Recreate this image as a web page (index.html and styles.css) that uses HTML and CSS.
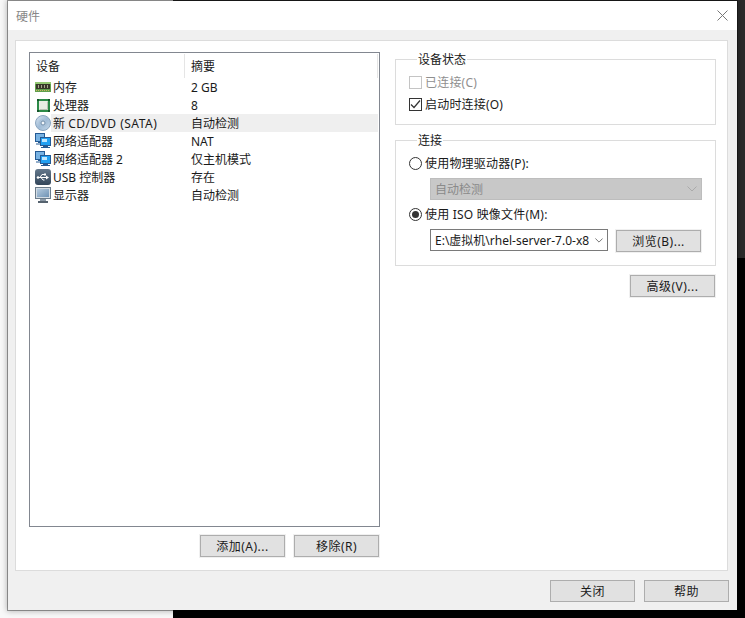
FILE: index.html
```html
<!DOCTYPE html>
<html lang="zh-CN">
<head>
    <meta charset="UTF-8">
    <meta name="viewport" content="width=device-width, initial-scale=1.0">
    <title>硬件</title>
    <link rel="stylesheet" href="styles.css">
</head>
<body>

<div class="dialog">
    <div class="title-bar">
        <span class="title-text">硬件</span>
        <svg class="close-icon" width="11" height="11" viewBox="0 0 11 11">
            <path d="M0.5 0.5 L10.5 10.5 M10.5 0.5 L0.5 10.5" stroke="#777" stroke-width="1" fill="none"/>
        </svg>
    </div>

    <div class="main-panel">
        <div class="left-column">
            <div class="device-list">
                <div class="list-head">
                    <div class="col-device">设备</div>
                    <div class="col-summary">摘要</div>
                    <div class="col-end"></div>
                </div>

                <div class="device-row">
                    <svg class="row-icon" viewBox="0 0 16 16">
                        <rect x="0" y="3" width="16" height="10" fill="#5f9f4c"/>
                        <rect x="0" y="3" width="16" height="2" fill="#93c873"/>
                        <rect x="1" y="5" width="14" height="5" fill="#37372a"/>
                        <path d="M3.5 6v3M6.5 6v3M9.5 6v3M12.5 6v3" stroke="#a5a58c" stroke-width="1"/>
                        <path d="M1 11.5h14" stroke="#c9b560" stroke-width="1" stroke-dasharray="1 1"/>
                    </svg>
                    <span class="device-name">内存</span>
                    <span class="device-summary">2 GB</span>
                </div>
                <div class="device-row">
                    <svg class="row-icon" viewBox="0 0 16 16">
                        <rect x="2" y="2" width="13" height="13" fill="#2c8a48"/>
                        <path d="M2 2h2v2H2zM13 2h2v2h-2zM2 13h2v2H2zM13 13h2v2h-2z" fill="#14542a"/>
                        <rect x="4" y="4" width="9" height="9" fill="#e9ede4"/>
                        <path d="M4.5 12.5h8v-8" stroke="#b9c2b4" fill="none"/>
                    </svg>
                    <span class="device-name">处理器</span>
                    <span class="device-summary">8</span>
                </div>
                <div class="device-row selected">
                    <svg class="row-icon" viewBox="0 0 16 16">
                        <defs>
                            <linearGradient id="disc-fill" x1="0" y1="0" x2="1" y2="1">
                                <stop offset="0" stop-color="#dbe6f1"/>
                                <stop offset="0.5" stop-color="#9fbbd6"/>
                                <stop offset="1" stop-color="#c8d9e9"/>
                            </linearGradient>
                        </defs>
                        <circle cx="8" cy="8" r="7.5" fill="url(#disc-fill)" stroke="#8ba6c0" stroke-width="1"/>
                        <circle cx="8" cy="8" r="3.5" fill="none" stroke="#a9c1d8" stroke-width="1"/>
                        <circle cx="8" cy="8" r="2" fill="#f2f6fa" stroke="#7490ab" stroke-width="1"/>
                    </svg>
                    <span class="device-name">新 <span class="wide-latin">CD/DVD (SATA)</span></span>
                    <span class="device-summary">自动检测</span>
                </div>
                <div class="device-row">
                    <svg class="row-icon" viewBox="0 0 16 16">
                        <rect x="0.5" y="0.5" width="9" height="8" fill="#78b2e2" stroke="#245a94"/>
                        <path d="M3 9.5h4M1 11h7" stroke="#245a94" fill="none"/>
                        <rect x="5.5" y="4.5" width="10" height="8" fill="#22a0f2" stroke="#245a94"/>
                        <rect x="7" y="6" width="5" height="3" fill="#bfe7ff"/>
                        <rect x="8" y="13" width="5" height="1" fill="#245a94"/>
                        <rect x="6" y="14" width="9" height="1" fill="#245a94"/>
                    </svg>
                    <span class="device-name">网络适配器</span>
                    <span class="device-summary">NAT</span>
                </div>
                <div class="device-row">
                    <svg class="row-icon" viewBox="0 0 16 16">
                        <rect x="0.5" y="0.5" width="9" height="8" fill="#78b2e2" stroke="#245a94"/>
                        <path d="M3 9.5h4M1 11h7" stroke="#245a94" fill="none"/>
                        <rect x="5.5" y="4.5" width="10" height="8" fill="#22a0f2" stroke="#245a94"/>
                        <rect x="7" y="6" width="5" height="3" fill="#bfe7ff"/>
                        <rect x="8" y="13" width="5" height="1" fill="#245a94"/>
                        <rect x="6" y="14" width="9" height="1" fill="#245a94"/>
                    </svg>
                    <span class="device-name">网络适配器 2</span>
                    <span class="device-summary">仅主机模式</span>
                </div>
                <div class="device-row">
                    <svg class="row-icon" viewBox="0 0 16 16">
                        <defs>
                            <linearGradient id="usb-fill" x1="0" y1="0" x2="0" y2="1">
                                <stop offset="0" stop-color="#64788c"/>
                                <stop offset="1" stop-color="#33465a"/>
                            </linearGradient>
                        </defs>
                        <rect x="0" y="0" width="16" height="16" rx="3" fill="url(#usb-fill)"/>
                        <path d="M3 8.5h8M5 8.5l2-3h2M6 8.5l2 2.5h1.5" stroke="#fff" stroke-width="1" fill="none"/>
                        <path d="M11 6.5l3 2-3 2z" fill="#fff"/>
                        <circle cx="3" cy="8.5" r="1.3" fill="#fff"/>
                        <rect x="9" y="4.5" width="2" height="2" fill="#fff"/>
                    </svg>
                    <span class="device-name">USB 控制器</span>
                    <span class="device-summary">存在</span>
                </div>
                <div class="device-row">
                    <svg class="row-icon" viewBox="0 0 16 16">
                        <defs>
                            <linearGradient id="screen-fill" x1="0" y1="0" x2="1" y2="1">
                                <stop offset="0" stop-color="#b4cade"/>
                                <stop offset="1" stop-color="#6f93b5"/>
                            </linearGradient>
                        </defs>
                        <rect x="0.5" y="0.5" width="15" height="11" fill="#d3dce4" stroke="#6b7c8b"/>
                        <rect x="2" y="2" width="12" height="8" fill="url(#screen-fill)"/>
                        <rect x="5" y="12" width="6" height="2" fill="#8b99a6"/>
                        <rect x="3" y="14" width="10" height="2" fill="#56636f"/>
                    </svg>
                    <span class="device-name">显示器</span>
                    <span class="device-summary">自动检测</span>
                </div>
            </div>

            <div class="list-buttons">
                <button class="btn">添加(A)...</button>
                <button class="btn">移除(R)</button>
            </div>
        </div>

        <div class="right-column">
            <fieldset class="group status-group">
                <legend>设备状态</legend>
                <div class="check-row disabled">
                    <span class="check-box"></span>
                    <span>已连接(C)</span>
                </div>
                <div class="check-row">
                    <span class="check-box">
                        <svg width="11" height="11" viewBox="0 0 11 11">
                            <path d="M1 5.5 L4 8.5 L10 1.5" stroke="#333" stroke-width="1.2" fill="none"/>
                        </svg>
                    </span>
                    <span>启动时连接(O)</span>
                </div>
            </fieldset>

            <fieldset class="group connect-group">
                <legend>连接</legend>
                <div class="radio-row">
                    <span class="radio"></span>
                    <span>使用物理驱动器(P):</span>
                </div>
                <div class="select-row">
                    <div class="select select-disabled">
                        <span>自动检测</span>
                        <svg class="chevron" width="10" height="6" viewBox="0 0 10 6">
                            <path d="M0.5 0.5 L5 5 L9.5 0.5" stroke="#aaa" fill="none"/>
                        </svg>
                    </div>
                </div>
                <div class="radio-row">
                    <span class="radio radio-on"></span>
                    <span>使用 ISO 映像文件(M):</span>
                </div>
                <div class="select-row">
                    <div class="select select-file">
                        <span class="file-path">E:\虚拟机\rhel-server-7.0-x8</span>
                        <svg class="chevron" width="8" height="5" viewBox="0 0 10 6">
                            <path d="M0.5 0.5 L5 5 L9.5 0.5" stroke="#555" fill="none"/>
                        </svg>
                    </div>
                    <button class="btn btn-browse">浏览(B)...</button>
                </div>
            </fieldset>

            <div class="advanced-row">
                <button class="btn">高级(V)...</button>
            </div>
        </div>
    </div>

    <div class="dialog-buttons">
        <button class="btn">关闭</button>
        <button class="btn">帮助</button>
    </div>
</div>

</body>
</html>
```

FILE: styles.css
```css
* {
    box-sizing: border-box;
}

html, body {
    margin: 0;
    padding: 0;
    height: 100%;
}

body {
    font-family: "Noto Sans", "Noto Sans CJK SC", sans-serif;
    font-size: 12px;
    color: #1a1a1a;
    background:
        linear-gradient(#2b2b2b, #2b2b2b) 173px 0 / 100% 258px no-repeat,
        linear-gradient(#000, #000) 173px 0 / 100% 100% no-repeat,
        #f8f8f8;
    overflow: hidden;
}

.dialog {
    width: 731px;
    height: 611px;
    margin-left: 7px;
    background: #f0f0f0;
    background-clip: padding-box;
    border: 1px solid rgba(0, 0, 0, 0.35);
    box-shadow: 0 0 6px rgba(0, 0, 0, 0.3);
    display: flex;
    flex-direction: column;
}

.title-bar {
    height: 29px;
    margin-bottom: 10px;
    padding: 0 9px 0 8px;
    background: #fff;
    display: flex;
    align-items: center;
    justify-content: space-between;
}

.title-text {
    color: #888;
}

.main-panel {
    height: 531px;
    margin: 0 9px 0 7px;
    padding: 11px 11px 12px 13px;
    background: #fff;
    border: 1px solid #dcdcdc;
    display: flex;
    gap: 15px;
}

.left-column {
    width: 351px;
    display: flex;
    flex-direction: column;
}

.device-list {
    height: 475px;
    border: 1px solid #828790;
    padding: 1px 1px 0 0;
}

.list-head {
    height: 24px;
    display: flex;
    align-items: center;
}

.col-device {
    width: 155px;
    height: 100%;
    padding-left: 6px;
    border-right: 1px solid #e5e5e5;
    display: flex;
    align-items: center;
}

.col-summary {
    padding-left: 6px;
}

.col-end {
    width: 1px;
    height: 100%;
    margin-left: auto;
    background: #e5e5e5;
}

.device-row {
    height: 18px;
    display: flex;
    align-items: center;
    padding-left: 5px;
}

.device-row.selected {
    background: linear-gradient(to right, #fff 21px, #efefef 21px);
}

.row-icon {
    width: 16px;
    height: 16px;
    margin-right: 2px;
    flex-shrink: 0;
}

.device-name {
    width: 138px;
    white-space: nowrap;
}

.wide-latin {
    letter-spacing: 0.5px;
}

.device-summary {
    white-space: nowrap;
}

.list-buttons {
    display: flex;
    justify-content: flex-end;
    gap: 9px;
    margin-top: 8px;
    padding-right: 1px;
}

.btn {
    width: 85px;
    height: 22px;
    padding: 0;
    background: #e1e1e1;
    border: 1px solid #adadad;
    font-family: inherit;
    font-size: 12px;
    letter-spacing: 0.5px;
    color: #1a1a1a;
}

.main-panel .btn {
    box-shadow: 0 0 0 1px #f0f0f0;
}

.right-column {
    width: 321px;
}

.group {
    margin: 0;
    padding: 0;
    border: 1px solid #dcdcdc;
    min-width: 0;
}

.group legend {
    margin-left: 8px;
    padding: 2px 1px 0;
    line-height: 14px;
}

.status-group {
    height: 74px;
    margin-top: -1px;
    padding: 4px 13px 0;
}

.check-row {
    height: 22px;
    display: flex;
    align-items: center;
    gap: 3px;
    letter-spacing: 0.2px;
}

.check-row.disabled {
    color: #8f8f8f;
}

.check-box {
    width: 13px;
    height: 13px;
    border: 1px solid #333;
    background: #fff;
    display: flex;
    align-items: center;
    justify-content: center;
}

.check-row.disabled .check-box {
    border-color: #c4c4c4;
}

.connect-group {
    height: 134px;
    margin-top: 7px;
    padding: 4px 13px 0;
}

.radio-row {
    height: 22px;
    display: flex;
    align-items: center;
    gap: 3px;
    letter-spacing: 0.2px;
}

.radio {
    width: 13px;
    height: 13px;
    border: 1px solid #333;
    border-radius: 50%;
    background: #fff;
    display: flex;
    align-items: center;
    justify-content: center;
}

.radio-on::after {
    content: "";
    width: 7px;
    height: 7px;
    border-radius: 50%;
    background: #333;
}

.select-row {
    display: flex;
    align-items: flex-start;
    gap: 8px;
    margin: 4px 0 3px 21px;
}

.select {
    height: 22px;
    display: flex;
    align-items: center;
    justify-content: space-between;
    padding: 0 4px;
}

.select-disabled {
    width: 272px;
    background: #c8c8c8;
    border: 1px solid #bdbdbd;
    color: #8a8a8a;
}

.select-file {
    width: 178px;
    background: #fff;
    border: 1px solid #7a7a7a;
}

.file-path {
    white-space: nowrap;
    overflow: hidden;
}

.chevron {
    flex-shrink: 0;
}

.btn-browse {
    margin-top: 1px;
}

.advanced-row {
    display: flex;
    justify-content: flex-end;
    margin-top: 9px;
    padding-right: 1px;
}

.dialog-buttons {
    display: flex;
    justify-content: flex-end;
    gap: 9px;
    padding: 9px 8px 0 0;
}
```
